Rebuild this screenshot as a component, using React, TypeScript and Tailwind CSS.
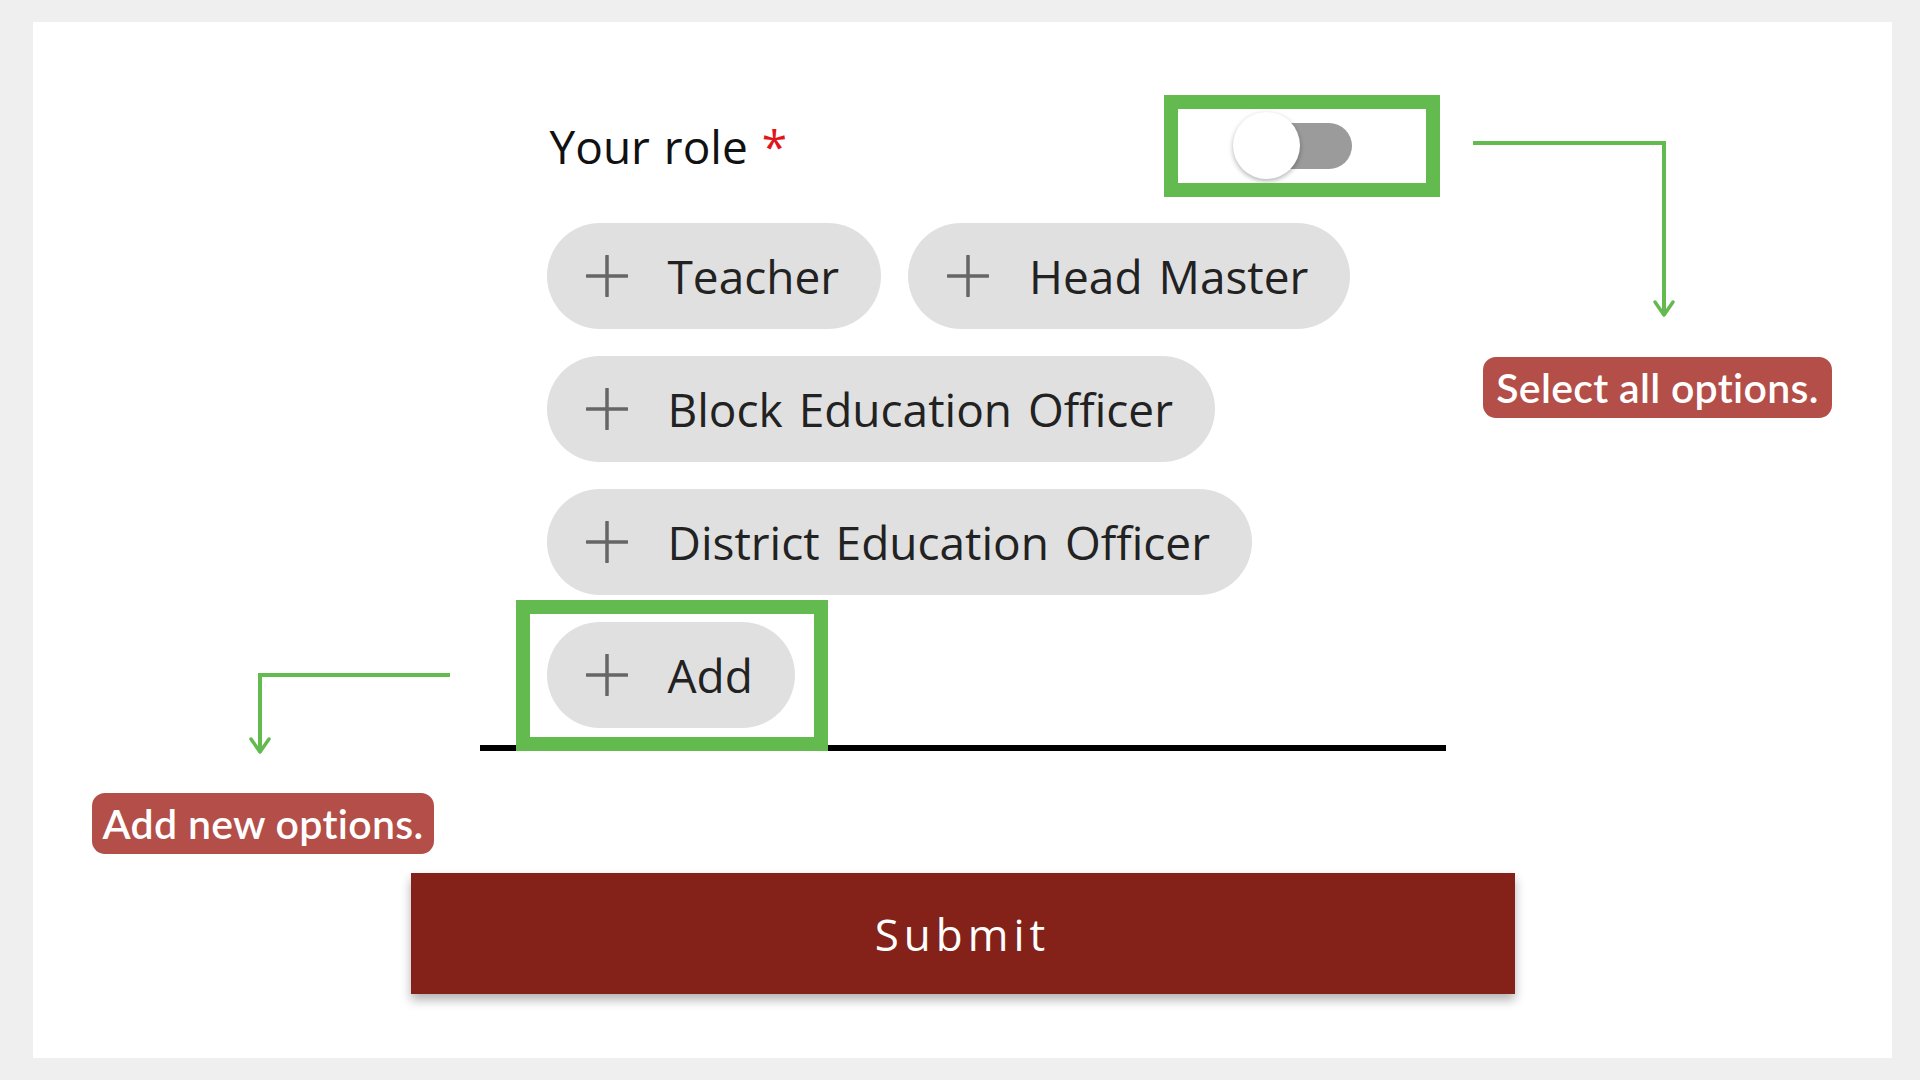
import React from "react";

interface ChipProps {
  label: string;
}

function PlusIcon() {
  return (
    <svg width="42" height="42" viewBox="0 0 42 42" className="flex-shrink-0">
      <line x1="21" y1="1" x2="21" y2="41" stroke="#666666" strokeWidth="3.5" strokeLinecap="round" />
      <line x1="1" y1="21" x2="41" y2="21" stroke="#666666" strokeWidth="3.5" strokeLinecap="round" />
    </svg>
  );
}

function Chip({ label }: ChipProps) {
  return (
    <div className="flex items-center h-[106px] rounded-full bg-[#e0e0e0] pl-[39px] pr-[42px] gap-[40px] text-[46px] leading-none text-[#222222]">
      <PlusIcon />
      <span>{label}</span>
    </div>
  );
}

function Toggle() {
  return (
    <div className="relative w-[119px] h-[67px]">
      <div className="absolute right-0 top-[11px] w-[96px] h-[46px] rounded-full bg-[#9b9b9b]" />
      <div className="absolute left-0 top-0 w-[67px] h-[67px] rounded-full bg-white shadow-[0_2px_5px_rgba(0,0,0,0.3)]" />
      {/* annotation box */}
      <div className="absolute -left-[69px] -top-[17px] w-[276px] h-[102px] border-[14px] border-[#63bb50]" />
    </div>
  );
}

function Badge({ text, className }: { text: string; className: string }) {
  return (
    <div
      className={`absolute flex items-center justify-center h-[61px] rounded-[13px] bg-[#b34e48] text-white text-[41px] font-semibold tracking-[0.3px] font-['Lato',sans-serif] leading-none whitespace-nowrap [word-spacing:0px] ${className}`}
    >
      {text}
    </div>
  );
}

export default function App() {
  const roles = ["Teacher", "Head Master", "Block Education Officer", "District Education Officer"];

  return (
    <div className="relative w-full h-screen bg-[#efefef] pt-[22px] pl-[33px] pr-[28px] pb-[22px] font-['Open_Sans',sans-serif] [word-spacing:4px]">
      <div className="h-full bg-white flex flex-col items-center">
        <div className="w-[966px] mt-[90px]">
          <div className="flex items-center justify-between h-[67px] pl-[70px] pr-[94px]">
            <div className="text-[46px] text-[#111111] leading-none [word-spacing:2px]">
              Your role <span className="text-[#e0161b]">*</span>
            </div>
            <Toggle />
          </div>

          <div className="flex flex-wrap gap-[27px] mt-[44px] pl-[67px] pr-[20px] pb-[17px] border-b-[6px] border-black">
            {roles.map((role) => (
              <Chip key={role} label={role} />
            ))}
            <div className="relative">
              <Chip label="Add" />
              <div className="absolute -left-[31px] -top-[22px] w-[312px] h-[151px] border-[14px] border-[#63bb50]" />
            </div>
          </div>
        </div>

        <button className="mt-[122px] w-[1104px] h-[121px] bg-[#84221a] text-white text-[44px] tracking-[5px] shadow-[0_6px_10px_rgba(0,0,0,0.3)]">
          Submit
        </button>
      </div>

      <svg className="absolute left-0 top-0 pointer-events-none" width="1920" height="1080">
        <g stroke="#63bb50" strokeWidth="4" fill="none">
          <polyline points="1473,143 1664,143 1664,314" />
          <polyline points="1655,302 1664,315 1673,302" strokeWidth="3.5" strokeLinecap="round" strokeLinejoin="round" />
          <polyline points="450,675 260,675 260,751" />
          <polyline points="251,739 260,752 269,739" strokeWidth="3.5" strokeLinecap="round" strokeLinejoin="round" />
        </g>
      </svg>

      <Badge text="Select all options." className="left-[1483px] top-[357px] w-[349px]" />
      <Badge text="Add new options." className="left-[92px] top-[793px] w-[342px]" />
    </div>
  );
}
